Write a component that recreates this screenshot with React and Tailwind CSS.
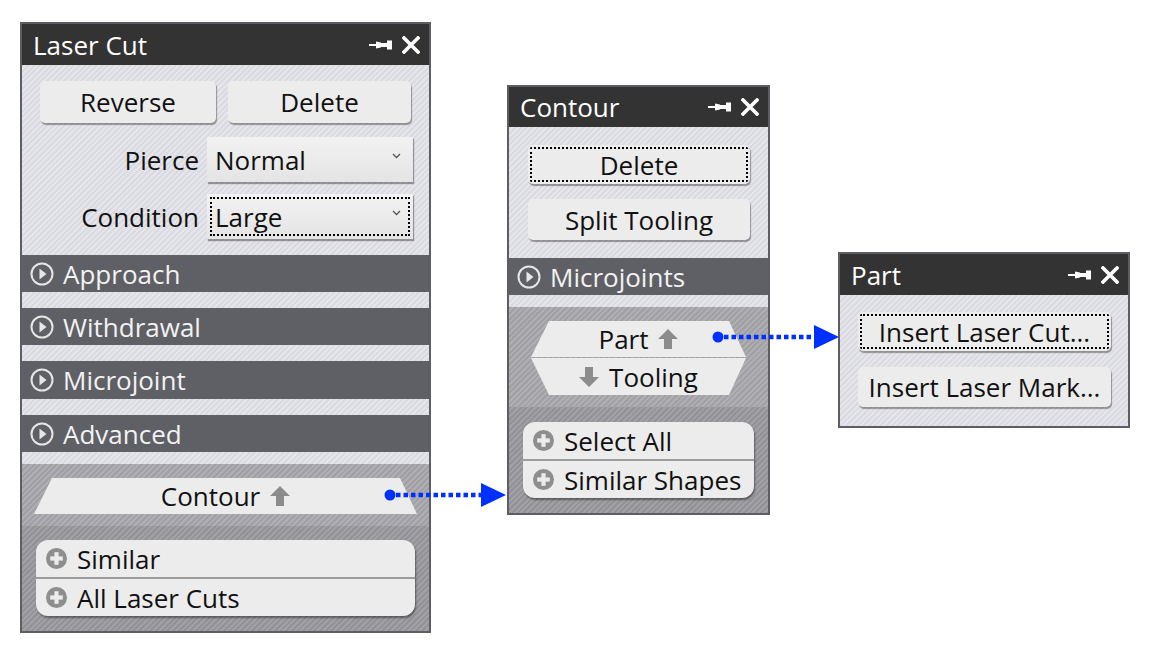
import React from "react";

const lightBg =
  "bg-[repeating-linear-gradient(135deg,#dadae1_0px,#dadae1_2px,#e5e5eb_2px,#e5e5eb_4px)]";
const midBg =
  "bg-[repeating-linear-gradient(135deg,#a1a1a5_0px,#a1a1a5_2px,#afafb3_2px,#afafb3_4px)]";
const darkBg =
  "bg-[repeating-linear-gradient(135deg,#939397_0px,#939397_2px,#a1a1a5_2px,#a1a1a5_4px)]";

const PinIcon = () => (
  <svg width="24" height="10" viewBox="0 0 24 10" fill="#ffffff">
    <rect x="0" y="4" width="8" height="2" />
    <path d="M7 1.5 L12 2.5 L12 7.5 L7 8.5 Z" />
    <rect x="12" y="3" width="6" height="4" />
    <rect x="18" y="0.5" width="5" height="9" />
  </svg>
);

const CloseIcon = () => (
  <svg width="18" height="18" viewBox="0 0 18 18">
    <path d="M2 2 L16 16 M16 2 L2 16" stroke="#ffffff" strokeWidth="3.6" strokeLinecap="square" />
  </svg>
);

const PlayCircle = () => (
  <svg width="24" height="24" viewBox="0 0 24 24">
    <circle cx="12" cy="12" r="10.5" fill="none" stroke="#e6e6e6" strokeWidth="2" />
    <path d="M9.5 6.5 L16.5 12 L9.5 17.5 Z" fill="#e6e6e6" />
  </svg>
);

const UpArrow = () => (
  <svg width="20" height="20" viewBox="0 0 20 20" fill="#8c8c8c">
    <path d="M10 0 L20 10 L14 10 L14 20 L6 20 L6 10 L0 10 Z" />
  </svg>
);

const DownArrow = () => (
  <svg width="20" height="20" viewBox="0 0 20 20" fill="#8c8c8c">
    <path d="M10 20 L20 10 L14 10 L14 0 L6 0 L6 10 L0 10 Z" />
  </svg>
);

const PlusCircle = () => (
  <svg width="21" height="21" viewBox="0 0 20 20">
    <circle cx="10" cy="10" r="10" fill="#8e8e8e" />
    <rect x="8" y="4" width="4" height="12" fill="#ececec" />
    <rect x="4" y="8" width="12" height="4" fill="#ececec" />
  </svg>
);

const Chevron = () => (
  <svg width="9" height="6" viewBox="0 0 9 6">
    <path d="M1 1 L4.5 4.5 L8 1" fill="none" stroke="#555" strokeWidth="1.3" />
  </svg>
);

const Panel = ({ title, className, headerH, children }) => (
  <div className={"flex flex-col shrink-0 border-2 border-[#5d5e64] " + className}>
    <div className={"bg-[#333333] flex items-center justify-between pl-[11px] pr-[9px] " + headerH}>
      <span className="text-white text-[26px] leading-none">{title}</span>
      <div className="flex items-center gap-[9px]">
        <PinIcon />
        <CloseIcon />
      </div>
    </div>
    {children}
  </div>
);

const Button = ({ children, className, focused }) => (
  <div
    className={
      "relative flex items-center justify-center bg-[#ececec] rounded-[5px] shadow-[1px_2px_1px_rgba(0,0,0,0.35)] text-[26px] leading-none text-[#111] " +
      className
    }
  >
    {focused && (
      <span className="absolute inset-[2px] border-2 border-dotted border-black rounded-[2px]"></span>
    )}
    <span>{children}</span>
  </div>
);

const Select = ({ value, focused }) => (
  <div className="relative w-[206px] h-[45px] flex items-center justify-between pl-[8px] pr-[12px] bg-[linear-gradient(#f2f2f2,#e4e4e4)] shadow-[1px_2px_1px_rgba(0,0,0,0.35)] text-[26px] leading-none text-[#111]">
    {focused && <span className="absolute inset-[3px] border-2 border-dotted border-black"></span>}
    <span>{value}</span>
    <span className="mb-[8px]">
      <Chevron />
    </span>
  </div>
);

const Bar = ({ label, h = "h-[37px]" }) => (
  <div className={"bg-[#5f6066] flex items-center pl-[8px] gap-[9px] text-[26px] leading-none text-[#f2f2f2] " + h}>
    <PlayCircle />
    <span>{label}</span>
  </div>
);

const Gap = ({ h }) => <div className={lightBg + " " + h}></div>;

const Group = ({ items, className }) => (
  <div className={"bg-[#ececec] rounded-[12px] shadow-[1px_2px_2px_rgba(0,0,0,0.4)] overflow-hidden " + className}>
    {items.map((item, i) => (
      <React.Fragment key={item}>
        {i > 0 && <div className="h-[2px] bg-[#9c9c9c]"></div>}
        <div className="h-[37px] flex items-center pl-[10px] gap-[10px] text-[26px] leading-none text-[#111]">
          <PlusCircle />
          <span>{item}</span>
        </div>
      </React.Fragment>
    ))}
  </div>
);

const Connector = ({ x1, x2, y }) => (
  <g>
    <circle cx={x1} cy={y} r="5.5" fill="#0030ff" />
    <line x1={x1 + 6} y1={y} x2={x2 - 25} y2={y} stroke="#0030ff" strokeWidth="4.5" strokeDasharray="4.5 3" />
    <path d={`M${x2 - 25} ${y - 12} L${x2} ${y} L${x2 - 25} ${y + 12} Z`} fill="#0030ff" />
  </g>
);

export default function App() {
  return (
    <div className="relative w-[1150px] h-[653px] bg-white overflow-hidden font-['Open_Sans','DejaVu_Sans',sans-serif]">
      <div className="flex items-start pl-[20px] pt-[22px]">
        {/* Laser Cut */}
        <Panel title="Laser Cut" className="w-[411px] h-[611px]" headerH="h-[41px]">
          <div className={lightBg + " h-[190px] pl-[18px] pr-[16px] pt-[16px]"}>
            <div className="flex gap-[12px] pr-[2px]">
              <Button className="w-[176px] h-[42px]">Reverse</Button>
              <Button className="flex-1 h-[42px]">Delete</Button>
            </div>
            <div className="flex items-center justify-end gap-[8px] mt-[14px] text-[26px] leading-none text-[#111]">
              <span>Pierce</span>
              <Select value="Normal" />
            </div>
            <div className="flex items-center justify-end gap-[8px] mt-[12px] text-[26px] leading-none text-[#111]">
              <span>Condition</span>
              <Select value="Large" focused />
            </div>
          </div>
          <Bar label="Approach" />
          <Gap h="h-[16px]" />
          <Bar label="Withdrawal" />
          <Gap h="h-[16px]" />
          <Bar label="Microjoint" h="h-[38px]" />
          <Gap h="h-[16px]" />
          <Bar label="Advanced" />
          <Gap h="h-[12px]" />
          <div className={midBg + " h-[62px] px-[12px] pt-[14px]"}>
            <div className="h-[36px] bg-[#ececec] flex items-center justify-center gap-[10px] text-[26px] leading-none text-[#111] [clip-path:polygon(18px_0,calc(100%_-_17px)_0,100%_100%,0_100%)]">
              <span>Contour</span>
              <UpArrow />
            </div>
          </div>
          <div className={darkBg + " flex-1 px-[14px] pt-[14px]"}>
            <Group items={["Similar", "All Laser Cuts"]} />
          </div>
        </Panel>

        {/* Contour */}
        <Panel title="Contour" className="w-[263px] h-[430px] ml-[76px] mt-[63px]" headerH="h-[40px]">
          <div className={lightBg + " h-[131px] pl-[19px] pt-[18px]"}>
            <Button className="w-[222px] h-[39px]" focused>
              Delete
            </Button>
            <Button className="w-[222px] h-[41px] mt-[15px]">Split Tooling</Button>
          </div>
          <Bar label="Microjoints" />
          <Gap h="h-[12px]" />
          <div className={midBg + " h-[100px] pl-[22px] pt-[14px]"}>
            <div className="w-[215px] flex flex-col gap-[1px] text-[26px] leading-none text-[#111]">
              <div className="h-[36px] bg-[#ececec] flex items-center justify-center gap-[10px] [clip-path:polygon(18px_0,calc(100%_-_17px)_0,100%_100%,0_100%)]">
                <span>Part</span>
                <UpArrow />
              </div>
              <div className="h-[37px] bg-[#ececec] flex items-center justify-center gap-[10px] [clip-path:polygon(0_0,100%_0,calc(100%_-_17px)_100%,18px_100%)]">
                <DownArrow />
                <span>Tooling</span>
              </div>
            </div>
          </div>
          <div className={darkBg + " flex-1 pl-[14px] pt-[15px]"}>
            <Group items={["Select All", "Similar Shapes"]} className="w-[231px]" />
          </div>
        </Panel>

        {/* Part */}
        <Panel title="Part" className="w-[292px] h-[176px] ml-[68px] mt-[230px]" headerH="h-[41px]">
          <div className={lightBg + " flex-1 pl-[18px] pt-[17px]"}>
            <Button className="w-[253px] h-[39px]" focused>
              Insert Laser Cut...
            </Button>
            <Button className="w-[253px] h-[40px] mt-[16px]">Insert Laser Mark...</Button>
          </div>
        </Panel>
      </div>

      <svg className="absolute inset-0 pointer-events-none" width="1150" height="653">
        <Connector x1={390} x2={506} y={495} />
        <Connector x1={718} x2={839} y={337} />
      </svg>
    </div>
  );
}
